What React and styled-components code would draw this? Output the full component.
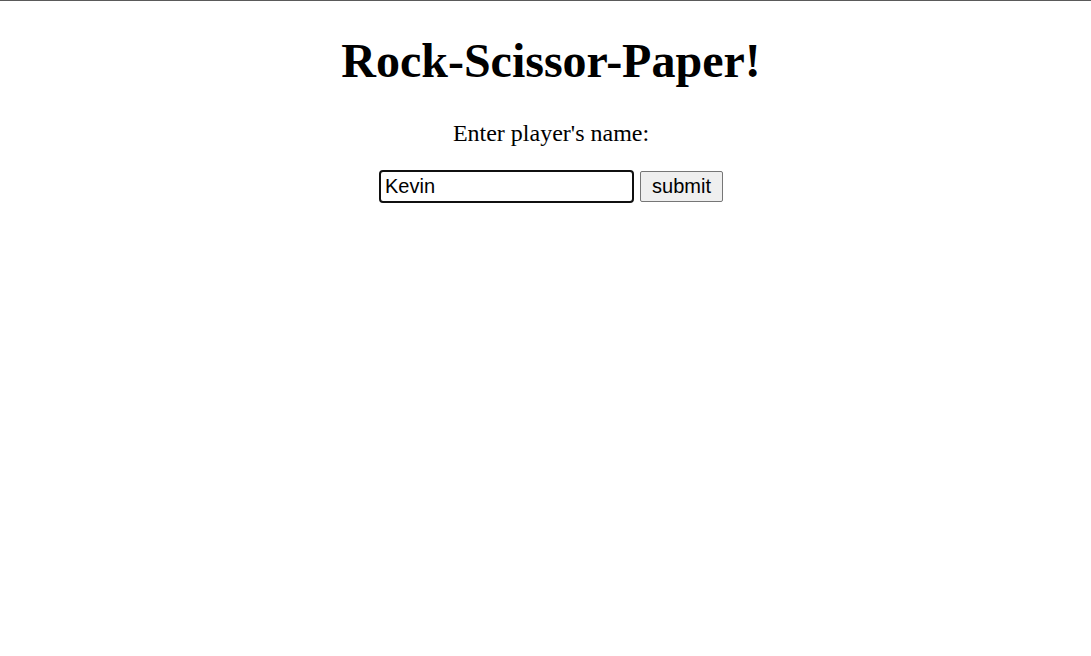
import React, { useEffect, useRef } from 'react';
import styled, { createGlobalStyle } from 'styled-components';

const GlobalStyle = createGlobalStyle`
  body {
    margin: 0;
    background: #fff;
    font-family: "Liberation Serif", "Times New Roman", serif;
  }
`;

const Page = styled.div`
  box-sizing: border-box;
  border-top: 1px solid #5a5a5a;
  min-height: 656px;
  padding-left: 11px;
  text-align: center;
  color: #000;
`;

const Title = styled.h1`
  font-size: 48px;
  font-weight: bold;
  margin: 32px 0 32px;
`;

const Prompt = styled.p`
  font-size: 24px;
  margin: 0;
`;

const Form = styled.form`
  display: flex;
  justify-content: center;
  align-items: center;
  gap: 6px;
  margin-top: 23px;
`;

const NameInput = styled.input`
  box-sizing: border-box;
  width: 255px;
  height: 33px;
  padding: 1px 4px;
  font: 20px "Liberation Sans", Arial, sans-serif;
  color: #000;
  border: 2px solid #101010;
  border-radius: 4px;
  outline: none;
  caret-color: #000;
`;

const SubmitButton = styled.button`
  box-sizing: border-box;
  width: 83px;
  height: 31px;
  padding: 1px 6px;
  font: 20px "Liberation Sans", Arial, sans-serif;
  color: #000;
  background: #efefef;
  border: 1px solid #767676;
  border-radius: 2px;
`;

export default function App() {
  const inputRef = useRef(null);

  useEffect(() => {
    const el = inputRef.current;
    if (el) {
      el.focus();
      el.setSelectionRange(5, 5);
    }
  }, []);

  return (
    <>
      <GlobalStyle />
      <Page>
        <Title>Rock-Scissor-Paper!</Title>
        <Prompt>Enter player's name:</Prompt>
        <Form onSubmit={e => e.preventDefault()}>
          <NameInput ref={inputRef} type="text" defaultValue="Kevin" />
          <SubmitButton type="submit">submit</SubmitButton>
        </Form>
      </Page>
    </>
  );
}
